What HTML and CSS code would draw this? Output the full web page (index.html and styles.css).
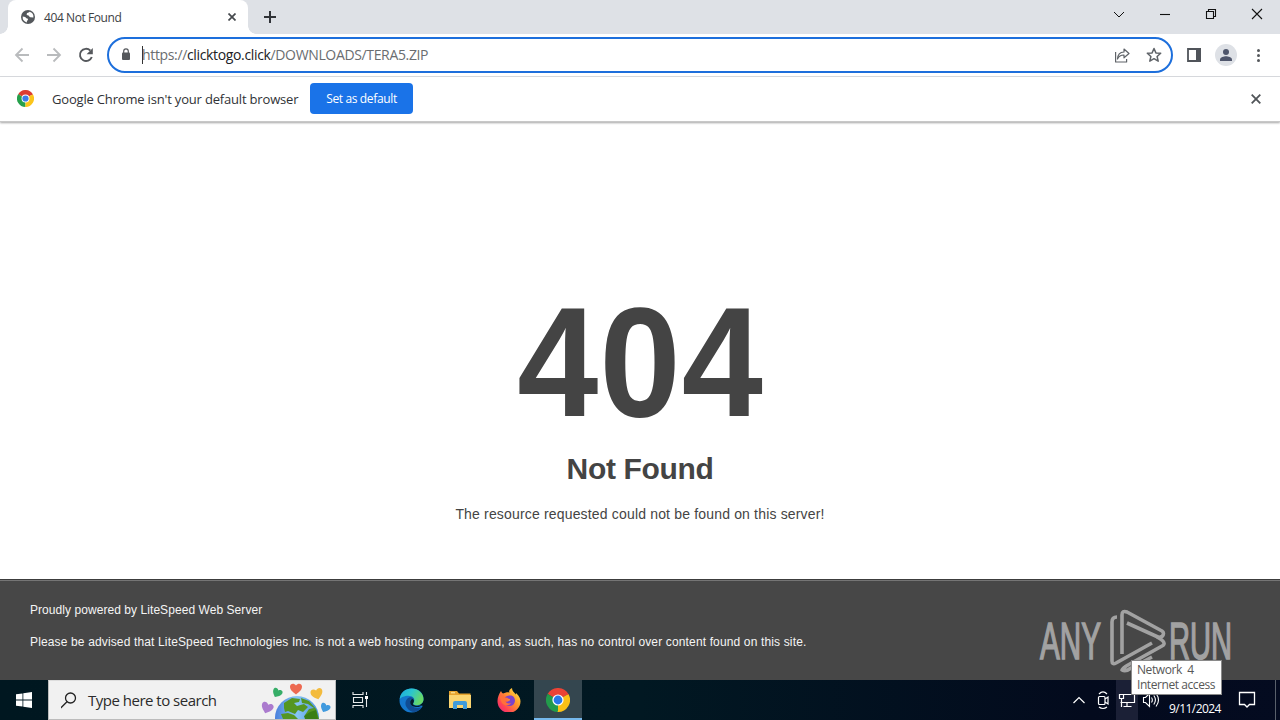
FILE: index.html
```html
<!DOCTYPE html>
<html lang="en">
<head>
<meta charset="utf-8">
<title>404 Not Found</title>
<link rel="stylesheet" href="styles.css">
</head>
<body>
<div class="tabstrip">
  <div class="tab">
    <svg class="globe" width="14" height="14" viewBox="0 0 14 14"><circle cx="7" cy="7" r="7" fill="#54585c"/><path d="M1.7 6.6 4.2 7l1.2 1.3 1.5.4v1.4l-1 1v1.3A5.5 5.5 0 0 1 1.7 6.6ZM8.4 1.7c-.2 1-1.2.9-2.2 1.2-.7.4 0 1.1-.7 1.5.5 1 1.7.6 2.4 1.3.5.6.5 1.4 1.4 1.6l3.1.3a5.5 5.5 0 0 0-4-5.9Z" fill="#fff"/></svg>
    <span class="tab-title">404 Not Found</span>
    <svg class="tab-close" width="8" height="8" viewBox="0 0 8 8"><path d="m.5.5 7 7m0-7-7 7" stroke="#45494d" stroke-width="1.7"/></svg>
  </div>
  <svg class="newtab" width="12" height="12" viewBox="0 0 12 12"><path d="M6 0v12M0 6h12" stroke="#303338" stroke-width="2"/></svg>
  <svg class="winctl" width="180" height="34" viewBox="0 0 180 34" fill="none" stroke="#111" stroke-width="1.1"><path d="m14 12 5 5 5-5" stroke-width="1"/><path d="M60 14.5h10"/><path d="M106.500 11.500h7v7h-7zM108.500 11V9.500h7v7h-1.500"/><path d="m152 9 10 10m0-10-10 10"/></svg>
</div>

<div class="toolbar">
  <svg class="nav" width="84" height="20" viewBox="0 0 84 20" fill="none"><g stroke="#b9bbbd" stroke-width="1.8"><path d="M18 10H5m6.500-6.500L5 10l6.500 6.500"/><path d="M36 10h13m-6.500-6.500L49 10l-6.500 6.500"/></g><path d="M79.300 5.500A6.100 6.100 0 1 0 80.800 12" stroke="#55585c" stroke-width="1.9"/><path d="M81.800 3v6.200h-6.200z" fill="#55585c"/></svg>
  <div class="omnibox">
    <svg class="lock" width="10" height="13" viewBox="0 0 10 13"><rect x="1" y="4.500" width="8" height="7.500" rx="1" fill="#55585c"/><path d="M2.700 5V3.200a2.300 2.300 0 0 1 4.600 0V5" fill="none" stroke="#55585c" stroke-width="1.200"/></svg>
    <i class="caret"></i><span class="url">https://<b>clicktogo.click</b>/DOWNLOADS/TERA5.ZIP</span>
    <svg class="share" width="50" height="18" viewBox="0 0 50 18" fill="none" stroke="#5f6368" stroke-width="1.200" stroke-linejoin="round"><path d="M1.600 6v10h11v-3M3.500 13c.2-4.600 2.700-6.800 6.500-7V3l5 4.500-5 4.300V9c-3-.1-5 1-6.500 4Z"/><path d="m40 2.500 1.900 4.400 4.800.4-3.600 3.200 1.100 4.700-4.200-2.500-4.200 2.500 1.100-4.700-3.600-3.200 4.800-.4z" stroke-width="1.500"/></svg>
  </div>
  <svg class="tools" width="84" height="24" viewBox="0 0 84 24"><path d="M4 6h12v12H4z" fill="none" stroke="#50545a" stroke-width="1.800"/><path d="M12 5h5v14h-5z" fill="#50545a"/><circle cx="42" cy="12" r="11" fill="#dee1e6"/><circle cx="42" cy="9" r="3" fill="#4f566c"/><path d="M36 18v-1.500c0-2 4-3.200 6-3.200s6 1.200 6 3.200V18z" fill="#4f566c"/><g fill="#55585c"><circle cx="74.500" cy="7.500" r="1.500"/><circle cx="74.500" cy="12.500" r="1.500"/><circle cx="74.500" cy="17.500" r="1.500"/></g></svg>
</div>

<div class="infobar">
  <svg class="chrome-s" width="17" height="17" viewBox="0 0 24 24"><path d="M12 12 1.600 6A12 12 0 0 1 22.400 6Z" fill="#dc3d31"/><path d="M12 12v12A12 12 0 0 1 1.600 6Z" fill="#25a04b"/><path d="M12 12 22.400 6A12 12 0 0 1 12 24Z" fill="#fbc51b"/><path d="M12 6.500h10.700L22.400 6 12 4z" fill="#dc3d31"/><path d="m16.800 14.700-5.400 9.300H12l4-3z" fill="#fbc51b"/><path d="M7.200 14.700 1.900 5.500 1.600 6l2 6z" fill="#25a04b"/><circle cx="12" cy="12" r="5.600" fill="#fff"/><circle cx="12" cy="12" r="4.400" fill="#3b7de9"/></svg>
  <span class="info-text">Google Chrome isn't your default browser</span>
  <button class="default-btn"><span>Set as default</span></button>
  <svg class="info-close" width="10" height="10" viewBox="0 0 10 10"><path d="m.7.7 8.600 8.600m0-8.600L.7 9.300" stroke="#505458" stroke-width="1.800"/></svg>
</div>

<main class="page">
  <div class="message">
    <h1>404</h1>
    <h2>Not Found</h2>
    <p>The resource requested could not be found on this server!</p>
  </div>
  <footer class="foot">
    <div><p class="f1">Proudly powered by LiteSpeed Web Server</p>
    <p class="f2">Please be advised that LiteSpeed Technologies Inc. is not a web hosting company and, as such, has no control over content found on this site.</p></div>
    <svg class="watermark" width="204" height="70" viewBox="0 0 204 70">
      <g fill="#a2a2a2" stroke="#a2a2a2" stroke-width="1.600" font-family="Liberation Sans, sans-serif" font-size="52"><text x="4" y="54" textLength="61" lengthAdjust="spacingAndGlyphs">ANY</text><text x="133" y="54" textLength="63" lengthAdjust="spacingAndGlyphs">RUN</text></g>
      <g fill="none" stroke="#a2a2a2" stroke-width="3.600" stroke-linejoin="round"><path d="M81 12q-5 0-5 5v39q0 4 4 2l36-20"/><path d="M86 49V10q0-5 5-3l35 19q3 2 0 5.500l-3 1L91 18"/><path d="M121 32q11 6 5 9L92 60q-5 3-6 5 4 2 9-2l21-11"/></g>
    </svg>
  </footer>
</main>

<div class="taskbar">
  <div class="start"><svg width="16" height="16" viewBox="0 0 16 16" fill="#fff"><path d="M0 2.300 6.500 1.400v6.200H0zM7.300 1.300 16 0v7.600H7.300zM0 8.400h6.500v6.200L0 13.700zM7.300 8.400H16V16l-8.700-1.300z"/></svg></div>
  <div class="search">
    <svg width="17" height="17" viewBox="0 0 17 17" fill="none" stroke="#222" stroke-width="1.300"><circle cx="9.500" cy="6" r="5"/><path d="M6 9.700-.3 16"/></svg>
    <span class="search-text">Type here to search</span>
    <svg class="earth" width="74" height="39" viewBox="0 0 74 39">
      <defs><linearGradient id="sea" x1="0" x2="1"><stop offset="0" stop-color="#4a80dc"/><stop offset=".5" stop-color="#88c6f5"/><stop offset="1" stop-color="#4b91df"/></linearGradient><path id="heart" d="M0 5.500C-3 3-6 1-6-2.500-6-5.500-2-6.500 0-3.500 2-6.500 6-5.500 6-2.500 6 1 3 3 0 5.500Z"/></defs>
      <circle cx="36" cy="38" r="22" fill="url(#sea)"/>
      <path d="m23 23 8-5 8 1-1 3-5 1 3 3 7-2 4 3-5 5-5-2-3 4-7-3-3 1-1-4zM40 18l8 3 7 8 3 10H45l-1-4 4-6 5-1-6-4-6-1zM20 34l7-1 6 2 4 4H22z" fill="#559622"/><path d="m43 36 6-4 6-2 2 9H44z" fill="#397e16"/>
      <use href="#heart" x="35" y="9" fill="#ed6951"/><use href="#heart" transform="translate(16 13) rotate(28) scale(.82)" fill="#36ad67"/><use href="#heart" transform="translate(56 14) rotate(-15)" fill="#f3bb3d"/><use href="#heart" transform="translate(6 28) rotate(20)" fill="#ab7bce"/><use href="#heart" transform="translate(64 28) rotate(25) scale(.82)" fill="#409ade"/>
    </svg>
  </div>
  <div class="app"><svg width="17" height="17" viewBox="0 0 17 17" fill="none" stroke="#e7eaeb" stroke-width="1.100"><path d="M1 0v2.500h10V0M1 16v-2.500h10V16M1.500 5.500h9v5h-9zM14.500 0v3m0 4v8"/><path d="M13 4h3v3h-3z" fill="#fff" stroke="none"/></svg></div>
  <div class="app pinned"><svg width="25" height="25" viewBox="0 0 25 25"><defs><linearGradient id="edge" x1="0" y1="0" x2="1" y2=".4"><stop stop-color="#1ba9df"/><stop offset=".5" stop-color="#2bc5ce"/><stop offset="1" stop-color="#67d967"/></linearGradient></defs><path d="M24.500 11C24.500 5 20 .5 12.500.5a12 12 0 0 0 0 24c4.500 0 8.500-2 10.800-5.800.4-.8-.1-1.500-1-1l-4-.5c3.500 0 6.200-2.500 6.200-6.200Z" fill="#1477cd"/><path d="M.7 11C1.500 4.500 6.500.5 12.500.5c7.500 0 12 5.500 12 10.500 0 4-3 6.200-6.500 6.200-3.500 0-4.500-1.400-3.600-2.500 2.600-3.600-.4-7-5-7C5.300 7.700 1.800 9.500.7 11Z" fill="url(#edge)"/><path d="M10 9.500c-3.500 2-4.500 6-2.500 9.500 2 3.600 5.300 5.300 8.500 5.100 3-1 5.500-2.600 7-5.100-6 2.500-11.500-.5-12-4-.3-1.900.7-3.500.7-3.500 1.500-1.500 2.500-.5 3.300.5 0-2-2-3.500-5-2.500Z" fill="#104c93"/><path d="M11.200 15c.3 3 3.500 4 7 4 2 0 3.500-.6 4.700-1.500-2.300.8-6.500.5-8.200-.4-1.200-1-.4-1.900-.1-2.500.8-1.600.3-3-1-3.500-1.500 0-2.600 1.700-2.400 3.900Z" fill="#041c2c"/></svg></div>
  <div class="app pinned"><svg width="22" height="20" viewBox="0 0 22 20"><path d="M0 1h8l2 2.500h11.500V18H0z" fill="#e6a32d"/><path d="M0 5h22v13H0z" fill="#fbd570"/><path d="M2 2.300h4v1H2z" fill="#fff2b0"/><path d="M4 19v-6q0-2 2-2h10q2 0 2 2v6h-4v-4H8v4z" fill="#409cdb"/></svg></div>
  <div class="app pinned"><svg width="24" height="24" viewBox="0 0 24 24"><defs><linearGradient id="fx" x1="1" y1="0" x2="0" y2="1"><stop stop-color="#fff24b"/><stop offset=".4" stop-color="#ff982c"/><stop offset=".75" stop-color="#ff4056"/><stop offset="1" stop-color="#df218b"/></linearGradient></defs><path d="M4 3c.5 1.200 1 2 2 2.500l3-1c1.500-.4 2.500-.3 3.400.2C11.500 2.800 13 .9 15 0c0 3 2 4 3.700 6.500L19 5c3.500 3 4.500 6 4.500 8.500A11.500 11.500 0 0 1 .5 13C.5 9 2 6 4 3Z" fill="url(#fx)"/><path d="M6.500 9.500c3-.5 4-2.500 7-2 2.500 0 4.500 2.200 4.500 5.500a5.700 5.700 0 0 1-11.300 0c2.800 1.700 4.800.3 6-.5 1-1-.2-2-1.700-1.700-2 .2-3 .1-4.500-1.300Z" fill="#7b42cc"/><path d="M2.500 8c3-.4 4.500 0 6 1.500l3 .5-3 3.500c1 2 3.500 2.500 5.500 1.500-2 4-8.500 3-10-2z" fill="#ff7139"/></svg></div>
  <div class="app active"><svg width="24" height="24" viewBox="0 0 24 24"><path d="M12 12 1.600 6A12 12 0 0 1 22.400 6Z" fill="#ea4335"/><path d="M12 12v12A12 12 0 0 1 1.600 6Z" fill="#229b4b"/><path d="M12 12 22.400 6A12 12 0 0 1 12 24Z" fill="#fbc116"/><path d="M12 6.500h10.700L22.400 6 12 4z" fill="#ea4335"/><path d="m16.800 14.700-5.400 9.300H12l4-3z" fill="#fbc116"/><path d="M7.200 14.700 1.900 5.500 1.600 6l2 6z" fill="#229b4b"/><circle cx="12" cy="12" r="5.600" fill="#fff"/><circle cx="12" cy="12" r="4.400" fill="#2878e8"/></svg></div>
  <div class="tray">
    <svg class="tray-left" width="48" height="40" viewBox="0 0 48 40" fill="none" stroke="#fff" stroke-width="1.200"><path d="m5.500 23 5.500-5.500 5.500 5.500"/><rect x="30.500" y="16.500" width="6.500" height="8" rx="1"/><path d="m37 19 3-2v7l-3-2M31 14q4-4 8 0M31 27q4 3 8 0"/></svg>
    <div class="network"><svg width="20" height="20" viewBox="0 0 20 20" fill="none" stroke="#fff" stroke-width="1.200"><path d="M6.500 4.500h11v8h-14M10 13v3.500m-3.500 0h8M4.500 8.500V17"/><path d="M2.500 4.500h4v4h-4z"/></svg></div>
    <svg class="volume" width="18" height="18" viewBox="0 0 18 18" fill="none" stroke="#fff" stroke-width="1.100"><path d="M1.500 6.500h2l4-4v13l-4-4h-2zM9.500 6.500q1.700 2.500 0 5M11.800 4.500q3.200 4.500 0 9M14 2.500q5 6.500 0 13"/></svg>
    <span class="date">9/11/2024</span>
    <svg class="notice" width="18" height="18" viewBox="0 0 18 18" fill="none" stroke="#fff" stroke-width="1.300"><path d="M1.500 1.500h15v12h-5L9 16l-2.500-2.500h-5z"/></svg>
    <i class="desk"></i>
  </div>
</div>
<div class="tooltip"><span class="t1">Network&nbsp; 4</span><span class="t2">Internet access</span></div>
</body>
</html>
```

FILE: styles.css
```css
* { box-sizing: border-box; }
body { margin: 0; width: 1280px; height: 720px; overflow: hidden; position: relative; display: flex; flex-direction: column; background: #fff; font-family: "Open Sans", "Noto Sans", sans-serif; }
svg { display: block; flex: none; }
span, p { white-space: nowrap; }

.tabstrip { height: 34px; flex: none; display: flex; background: #dee1e6; padding-left: 8px; }
.tab { position: relative; width: 240px; height: 34px; background: #fff; border-radius: 8px 8px 0 0; display: flex; align-items: center; padding: 0 12px 0 13px; }
.tab::before, .tab::after { content: ""; position: absolute; bottom: 0; width: 8px; height: 8px; }
.tab::before { left: -8px; background: radial-gradient(circle at 0 0, transparent 7.5px, #fff 8px); }
.tab::after { right: -8px; background: radial-gradient(circle at 100% 0, transparent 7.5px, #fff 8px); }
.tab-title { margin-left: 9px; font-size: 12px; color: #3c4043; letter-spacing: -.42px; }
.tab-close { margin-left: auto; }
.newtab { margin: 11px 0 0 16px; }
.winctl { margin-left: auto; }

.toolbar { height: 43px; flex: none; border-bottom: 1px solid #dadce0; display: flex; align-items: center; padding: 0 5px 1px 11px; }
.omnibox { width: 1066px; height: 36px; margin-left: 12px; border: 2px solid #1d6fdc; border-radius: 18px; display: flex; align-items: center; padding: 0 7px 0 12px; }
.caret { width: 1px; height: 18px; background: #333; margin: 0 -1px 0 11px; }
.url { font-size: 14px; color: #6a6d70; letter-spacing: -.35px; }
.url b { color: #202124; font-weight: 400; }
.share { margin-left: auto; }
.tools { margin-left: 11px; }

.infobar { height: 45px; flex: none; display: flex; align-items: center; padding: 0 19px 1px 17px; position: relative; border-bottom: 1px solid #c8c8c8; box-shadow: 0 1px 2px #a5a5a5; }
.info-text { margin-left: 18px; width: 246px; font-size: 13px; color: #303236; letter-spacing: -.18px; }
.default-btn { margin: 0 0 0 12px; width: 103px; height: 31px; border: 0; border-radius: 4px; padding: 0 0 1px; background: #1a73e8; color: #fff; font: 12px "Open Sans", sans-serif; letter-spacing: -.36px; }
.info-close { margin-left: auto; }

.page { flex: 1; min-height: 0; display: flex; flex-direction: column; align-items: center; color: #444; font-family: "Liberation Sans", Arial, sans-serif; }
.message { flex: 1; padding-top: 165px; text-align: center; }
.message h1 { margin: 0 0 0 2px; font-size: 156px; line-height: 150px; letter-spacing: 1.2px; transform: scaleX(.935); }
.message h2 { margin: 14px 0 0; font-size: 30px; line-height: 36px; letter-spacing: -.35px; }
.message p { margin: 19px 0 0; font-size: 14px; line-height: 16px; letter-spacing: .17px; }
.foot { width: 100%; height: 101px; background: #474747; border-top: 1px solid #3c3c3c; box-shadow: inset 0 1px #757575; padding: 0 40px 0 30px; display: flex; justify-content: space-between; color: #f5f5f5; font-size: 12px; }
.foot p { margin: 0; line-height: 16px; }
.foot .f1 { margin-top: 22px; letter-spacing: .06px; }
.foot .f2 { margin-top: 16px; letter-spacing: .143px; }
.watermark { margin-top: 25px; }

.taskbar { height: 40px; flex: none; display: flex; background: linear-gradient(90deg, #001720 0%, #011822 50%, #030a1d 85%, #040b20 100%); }
.start { width: 48px; display: flex; align-items: center; justify-content: center; }
.search { width: 288px; height: 40px; background: #f1f1f1; border: 1px solid #bcbcbc; border-top-color: #ddd; display: flex; align-items: center; padding: 0 0 0 12px; }
.search-text { margin-left: 10px; font-size: 15px; color: #2b2b2b; letter-spacing: -.5px; }
.earth { margin-left: auto; align-self: flex-end; }
.app { width: 48px; height: 40px; margin-right: 1px; display: flex; align-items: center; justify-content: center; }
.app.pinned { padding-left: 4px; }
.app.active { background: #34464f; border-bottom: 2px solid #76b9ed; padding-top: 2px; margin-left: 2px; }
.tray { margin-left: auto; display: flex; align-items: center; color: #fff; }
.network { width: 22px; height: 40px; background: #1b2036; display: flex; align-items: center; justify-content: center; }
.volume { margin-left: 4px; }
.date { align-self: flex-end; margin: 0 0 3px 9px; width: 53px; font-size: 12px; line-height: 16px; letter-spacing: -.55px; }
.notice { margin-left: 16px; }
.desk { width: 1px; height: 40px; margin: 0 4px 0 19px; background: #59606b; }
.tooltip { position: absolute; left: 1131px; top: 660px; width: 91px; height: 35px; border: 1px solid #8a8a8a; background: #fff; color: #575757; padding: 1px 5px; display: flex; flex-direction: column; font-size: 12px; line-height: 15px; letter-spacing: -.43px; }
```
